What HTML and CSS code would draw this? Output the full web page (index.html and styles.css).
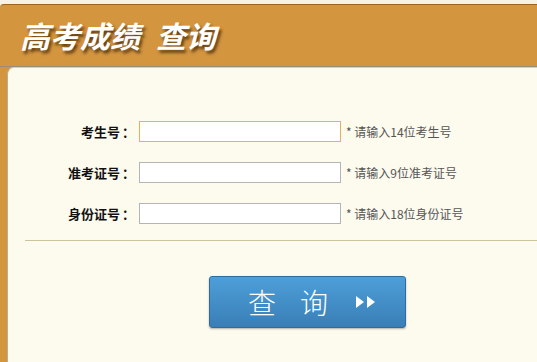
FILE: index.html
```html
<!DOCTYPE html>
<html lang="zh-CN">
<head>
    <meta charset="UTF-8">
    <title>高考成绩查询</title>
    <link rel="stylesheet" href="styles.css">
</head>
<body>

    <div class="page">
        <!-- Header -->
        <div class="header">
            <h1>高考成绩<span class="gap"></span>查询</h1>
        </div>

        <!-- Form Panel -->
        <div class="panel">
            <form class="query-form">
                <div class="row">
                    <label for="ksh">考生号<span class="colon">：</span></label>
                    <input type="text" id="ksh" class="focused">
                    <span class="hint">* 请输入14位考生号</span>
                </div>
                <div class="row">
                    <label for="zkzh">准考证号<span class="colon">：</span></label>
                    <input type="text" id="zkzh">
                    <span class="hint">* 请输入9位准考证号</span>
                </div>
                <div class="row">
                    <label for="sfzh">身份证号<span class="colon">：</span></label>
                    <input type="text" id="sfzh">
                    <span class="hint">* 请输入18位身份证号</span>
                </div>
            </form>

            <div class="divider"></div>

            <div class="actions">
                <button type="button" class="query-btn">
                    <span class="btn-text">查</span>
                    <span class="btn-text">询</span>
                    <svg class="btn-arrows" width="22" height="12" viewBox="0 0 22 12">
                        <path d="M1 0 L9 6 L1 12 Z" fill="#fff"/>
                        <path d="M12 0 L20 6 L12 12 Z" fill="#fff"/>
                    </svg>
                </button>
            </div>
        </div>
    </div>

</body>
</html>
```

FILE: styles.css
```css
* {
    margin: 0;
    padding: 0;
    box-sizing: border-box;
}
body {
    background: #f6f3e6;
    font-family: "Noto Sans CJK SC", "Liberation Sans", sans-serif;
    height: 362px;
    overflow: hidden;
    padding-top: 4px;
}
.page {
    background: #d4953f;
    border-top: 1px solid #9c6420;
    border-radius: 4px 0 0 0;
    height: 358px;
    display: flex;
    flex-direction: column;
}
.header {
    height: 62px;
    padding-left: 20px;
    border-bottom: 1px solid #9a8c76;
}
.header h1 {
    color: #fff;
    font-size: 30px;
    font-weight: bold;
    font-style: italic;
    line-height: 60px;
    text-shadow: 2px 3px 3px rgba(50, 25, 0, 0.7);
}
.header .gap {
    display: inline-block;
    width: 16px;
}
.panel {
    flex: 1;
    margin-left: 7px;
    background: #fdfaee;
    border-left: 1px solid #b8ad98;
    border-top: 1px solid #d8cfb8;
    border-radius: 7px 0 0 0;
    padding-top: 53px;
}
.query-form {
    display: flex;
    flex-direction: column;
    gap: 20px;
}
.row {
    display: flex;
    align-items: center;
    height: 21px;
}
.row label {
    width: 127px;
    text-align: right;
    font-size: 13px;
    font-weight: bold;
    color: #111;
    margin-right: 4px;
}
.row .colon {
    font-family: "Noto Sans CJK TC", sans-serif;
    margin-left: 2px;
}
.row input {
    width: 202px;
    height: 21px;
    border: 1px solid #b5b5b5;
    background: #fff;
    outline: none;
}
.row input.focused {
    border-color: #e2b25c;
}
.hint {
    margin-left: 5px;
    font-size: 12px;
    color: #555;
}
.divider {
    margin: 16px 0 0 17px;
    height: 1px;
    background: #cbc39d;
}
.actions {
    padding: 35px 0 0 201px;
}
.query-btn {
    width: 197px;
    height: 52px;
    border: 1px solid #2f6b9c;
    border-radius: 3px;
    background: linear-gradient(#4d9fd9, #3a7eb6);
    box-shadow: 0 1px 2px rgba(0, 0, 0, 0.3);
    display: flex;
    align-items: center;
    padding-left: 38px;
    font-family: "Noto Sans CJK SC", sans-serif;
}
.btn-text {
    color: #fff;
    font-size: 28px;
    font-weight: 300;
    margin-right: 24px;
    line-height: 1;
}
.btn-arrows {
    margin-left: 3px;
}
```
